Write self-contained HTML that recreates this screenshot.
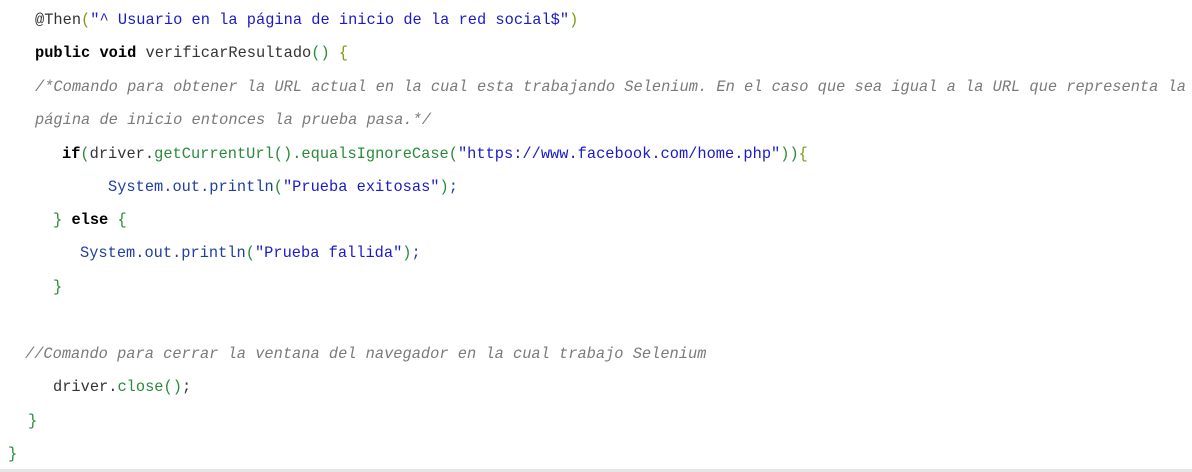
<!DOCTYPE html>
<html><head><meta charset="utf-8"><style>
body{margin:0;width:1192px;height:472px;background:#fff;position:relative;overflow:hidden;font-family:"Liberation Mono",monospace;font-size:15.35px;color:#333}
.l{position:absolute;white-space:pre;line-height:20px}
.s{color:#1a1acc}.g{color:#2a8a3a}.y{color:#7a9a10}.c{color:#7a7a7a;font-style:italic}.k{color:#000;font-weight:bold}.b{color:#1f3fa0}
.bot{position:absolute;left:0;top:469px;width:1192px;height:3px;background:#e6e6e6}
</style></head><body>
<div class="l" style="left:35px;top:10px">@Then<span class="y">(</span><span class="s">"^ Usuario en la página de inicio de la red social$"</span><span class="y">)</span></div>
<div class="l" style="left:35px;top:43px"><span class="k">public void</span> verificarResultado<span class="g">()</span> <span class="y">{</span></div>
<div class="l c" style="left:35px;top:77px">/*Comando para obtener la URL actual en la cual esta trabajando Selenium. En el caso que sea igual a la URL que representa la</div>
<div class="l c" style="left:35px;top:110px">página de inicio entonces la prueba pasa.*/</div>
<div class="l" style="left:62px;top:144px"><span class="k">if</span><span class="g">(</span>driver.<span class="g">getCurrentUrl().equalsIgnoreCase(</span><span class="s">"https://www.facebook.com/home.php"</span><span class="g">))</span><span class="y">{</span></div>
<div class="l b" style="left:108px;top:177px">System.out.println<span class="g">(</span><span class="s">"Prueba exitosas"</span><span class="g">)</span>;</div>
<div class="l" style="left:53px;top:210px"><span class="g">}</span> <span class="k">else</span> <span class="g">{</span></div>
<div class="l b" style="left:80px;top:243px">System.out.println<span class="g">(</span><span class="s">"Prueba fallida"</span><span class="g">)</span>;</div>
<div class="l g" style="left:53px;top:277px">}</div>
<div class="l c" style="left:25px;top:344px">//Comando para cerrar la ventana del navegador en la cual trabajo Selenium</div>
<div class="l" style="left:53px;top:377px">driver.<span class="g">close()</span>;</div>
<div class="l g" style="left:28px;top:411px">}</div>
<div class="l g" style="left:8px;top:444px">}</div>
<div class="bot"></div>
</body></html>
